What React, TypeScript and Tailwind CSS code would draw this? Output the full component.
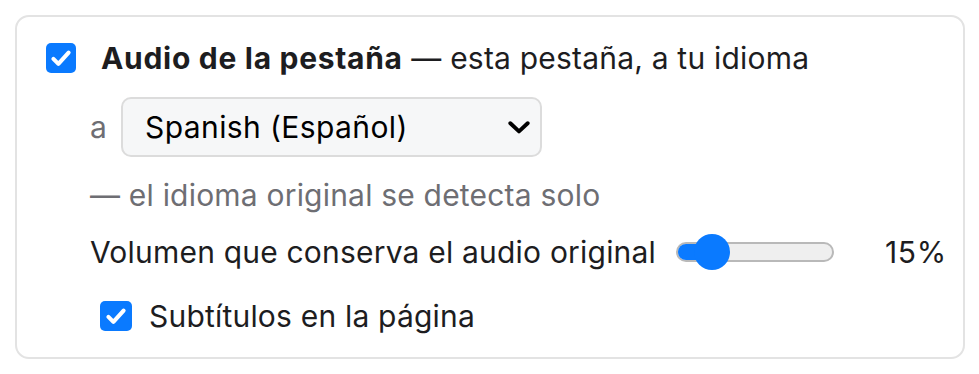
import React from 'react'

const font = { fontFamily: 'Inter, "Liberation Sans", sans-serif' }

function Check({ className }: { className: string }) {
  return (
    <div className={`flex shrink-0 items-center justify-center rounded-[5px] bg-[#0a7aff] ${className}`}>
      <svg viewBox="0 0 24 24" className="h-[26px] w-[26px]" fill="none">
        <path d="M5 12.8l4.6 4.6L19 7" stroke="white" strokeWidth="3.8" strokeLinecap="round" strokeLinejoin="round" />
      </svg>
    </div>
  )
}

function Slider() {
  return (
    <div className="relative flex h-[36px] w-[160px] shrink-0 items-center">
      <div className="h-[20px] w-[158px] overflow-hidden rounded-full border-2 border-[#b9b9b9] bg-[#efefef]">
        <div className="h-full w-[36px] bg-[#0a7aff]" />
      </div>
      <div className="absolute left-[18px] top-0 h-[36px] w-[36px] rounded-full bg-[#0a7aff]" />
    </div>
  )
}

export default function App() {
  return (
    <main className="min-h-[374px] bg-white pl-[15px] pt-[15px] text-[#1d1d1f]" style={font}>
      <div className="h-[344px] w-[950px] whitespace-nowrap rounded-[14px] border-2 border-[#e3e3e3] pl-[29px] pr-[10px] pt-[25px] text-[30px] leading-none tracking-[0.2px]">
        <div className="flex h-[32px] items-center">
          <Check className="h-[30px] w-[30px]" />
          <div className="ml-[25px]">
            <span className="font-bold tracking-[0.7px]">Audio de la pestaña</span> — esta pestaña, a tu idioma
          </div>
        </div>

        <div className="ml-[44px] mt-[23px] flex items-center">
          <span className="text-[#6e6e73]">a</span>
          <div className="ml-[14px] flex h-[60px] w-[421px] items-center justify-between rounded-[10px] border-2 border-[#dcdcdc] bg-[#f6f7f8] pl-[22px] pr-[8px]">
            <span className="tracking-[0.4px] text-black">Spanish (Español)</span>
            <svg viewBox="0 0 24 24" className="h-[26px] w-[26px]" fill="none">
              <path d="M4 8.5l8 7.5L20 8.5" stroke="black" strokeWidth="3.6" strokeLinecap="round" strokeLinejoin="round" />
            </svg>
          </div>
        </div>

        <div className="ml-[44px] mt-[20px] flex h-[36px] items-center text-[#6e6e73]">
          — el idioma original se detecta solo
        </div>

        <div className="ml-[44px] mt-[21px] flex h-[36px] items-center">
          <span className="shrink-0">Volumen que conserva el audio original</span>
          <div className="ml-[20px]">
            <Slider />
          </div>
          <span className="ml-[49px] shrink-0 tracking-[0.6px]">15%</span>
        </div>

        <div className="ml-[54px] mt-[30px] flex h-[32px] items-center">
          <Check className="h-[30px] w-[32px]" />
          <span className="ml-[17px]">Subtítulos en la página</span>
        </div>
      </div>
    </main>
  )
}
